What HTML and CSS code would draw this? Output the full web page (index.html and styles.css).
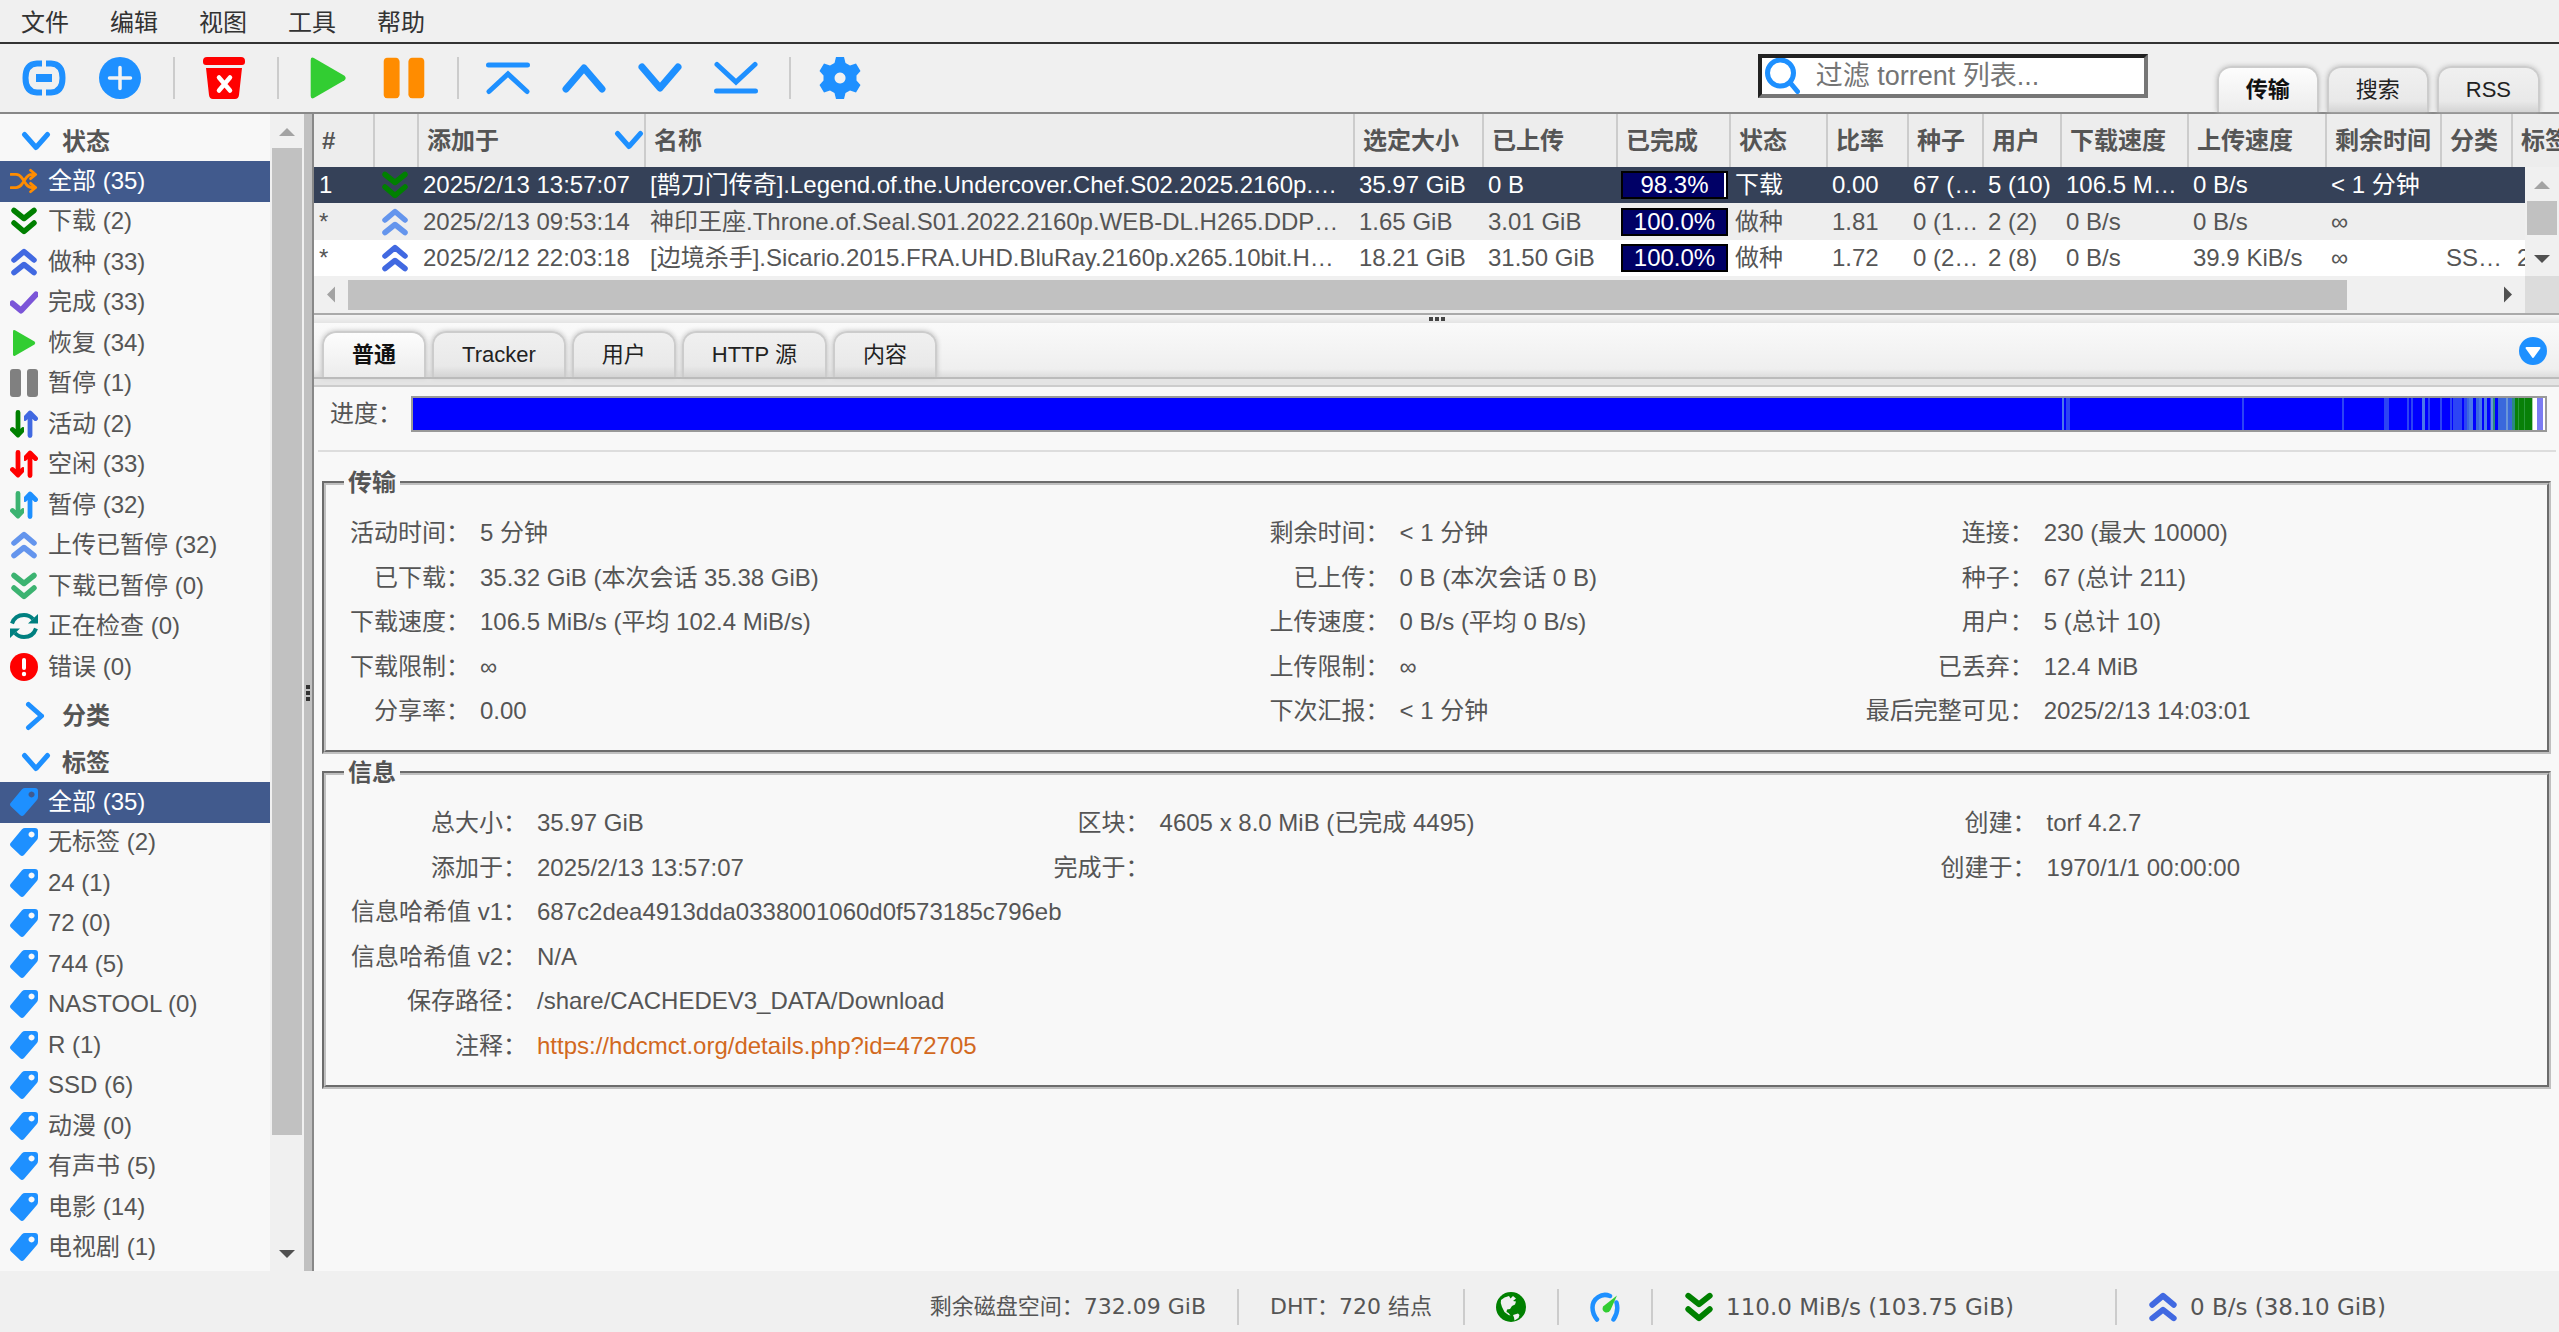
FILE: index.html
```html
<!DOCTYPE html>
<html lang="zh-CN">
<head>
<meta charset="utf-8">
<title>qBittorrent</title>
<link rel="stylesheet" href="styles.css">
</head>
<body>
<svg class="sprite" aria-hidden="true">
  <symbol id="i-down2" viewBox="0 0 28 28"><path d="M4 3.500l10 8 10-8M4 16l10 8.500L24 16" fill="none" stroke="currentColor" stroke-width="5.500" stroke-linecap="round" stroke-linejoin="round"/></symbol>
  <symbol id="i-up2" viewBox="0 0 28 28"><path d="M4 12l10-8.500L24 12M4 24.500l10-8 10 8" fill="none" stroke="currentColor" stroke-width="5.500" stroke-linecap="round" stroke-linejoin="round"/></symbol>
  <symbol id="i-chev" viewBox="0 0 30 30"><path d="M3.500 7.500L15 20.500l11.500-13" fill="none" stroke="currentColor" stroke-width="5" stroke-linecap="round" stroke-linejoin="round"/></symbol>
  <symbol id="i-play" viewBox="0 0 28 28"><path d="M3 2.500Q3 .500 5 1.200L24.500 12.500Q26 14 24.500 15.500L5 26.800Q3 27.500 3 25.500z" fill="#32cd32"/></symbol>
  <symbol id="i-pause" viewBox="0 0 28 28"><rect width="11" height="28" rx="3" fill="currentColor"/><rect x="17" width="11" height="28" rx="3" fill="currentColor"/></symbol>
  <symbol id="i-arrow" viewBox="0 0 14 28"><path d="M8 2.500v22M2.500 19.500L8 25l5-5.500" fill="none" stroke="currentColor" stroke-width="4.800" stroke-linecap="round" stroke-linejoin="round"/></symbol>
  <symbol id="i-tag" viewBox="0 0 28 28"><path fill="#1e90ff" fill-rule="evenodd" d="M15 0h10q3 0 3 3v6q0 2-1.500 3.500L14 27q-2 1.800-4 0L1 18.500q-2-2 0-4L12 1.200Q13.300 0 15 0zM21.500 3.500a3 3 0 1 0 .1 0z"/></symbol>
</svg>

<nav class="menubar">
  <button>文件</button><button>编辑</button><button>视图</button><button>工具</button><button>帮助</button>
</nav>

<header class="toolbar">
  <button class="tool" aria-label="添加链接"><svg viewBox="0 0 44 44"><path d="M20 7.500H15Q3.500 8 3.500 22T15 36.500h5M24 7.500H29Q40.500 8 40.500 22T29 36.500h-5" fill="none" stroke="#1e90ff" stroke-width="6"/><path d="M14 18h16v8H14z" fill="#1e90ff"/></svg></button>
  <button class="tool" aria-label="添加文件"><svg viewBox="0 0 44 44"><circle cx="22" cy="22" r="21" fill="#1e90ff"/><path d="M22 11.500v21M11.500 22h21" stroke="#f2f2f2" stroke-width="3.500" stroke-linecap="round"/></svg></button>
  <i class="tsep"></i>
  <button class="tool" aria-label="删除"><svg viewBox="0 0 44 44"><path d="M5 1h34q4 0 4 4v1q0 3-3 3H4Q1 9 1 6V5q0-4 4-4zM4 12h36l-3 27q-.500 4-4 4H11q-3.500 0-4-4z" fill="red"/><path d="M17 21.500l11 13M28 21.500l-11 13" stroke="#fff" stroke-width="4.500" stroke-linecap="round"/></svg></button>
  <i class="tsep"></i>
  <button class="tool" aria-label="恢复"><svg viewBox="0 0 28 28"><use href="#i-play"/></svg></button>
  <button class="tool orange" aria-label="暂停"><svg viewBox="-1 0 30 28"><use href="#i-pause" width="28" height="28"/></svg></button>
  <i class="tsep"></i>
  <button class="tool" aria-label="移到顶部"><svg viewBox="0 0 44 44"><path d="M2.500 9h39M3 35.500l19-17.500 19 17.500" fill="none" stroke="#1e90ff" stroke-width="5" stroke-linecap="round"/></svg></button>
  <button class="tool" aria-label="上移"><svg viewBox="0 0 44 44"><path d="M4 33L22 12l18 21" fill="none" stroke="#1e90ff" stroke-width="7" stroke-linecap="round" stroke-linejoin="round"/></svg></button>
  <button class="tool" aria-label="下移"><svg viewBox="0 0 44 44"><path d="M4 11l18 21 18-21" fill="none" stroke="#1e90ff" stroke-width="7" stroke-linecap="round" stroke-linejoin="round"/></svg></button>
  <button class="tool" aria-label="移到底部"><svg viewBox="0 0 44 44"><path d="M2.500 35h39M3 8.500L22 26 41 8.500" fill="none" stroke="#1e90ff" stroke-width="5" stroke-linecap="round"/></svg></button>
  <i class="tsep"></i>
  <button class="tool" aria-label="选项"><svg viewBox="0 0 44 44"><path fill="#1e90ff" fill-rule="evenodd" d="M18 1h8l1.500 6 4.500 2.500 6-2 4.500 7.500-4 4.500v5l4 4.500L38 36.500l-6-2-4.500 2.500-1.500 6h-8l-1.500-6-4.500-2.500-6 2L1.500 29l4-4.500v-5l-4-4.500L6 7.500l6 2L16.500 7zM22 16.500a5.500 5.500 0 1 0 .1 0z"/></svg></button>
  <label class="search">
    <svg viewBox="0 0 36 36"><circle cx="16.500" cy="15" r="13" fill="none" stroke="#1e90ff" stroke-width="5"/><path d="M26 24.500l7.500 9" stroke="#1e90ff" stroke-width="5" stroke-linecap="round"/></svg>
    <input type="text" placeholder="过滤 torrent 列表..." aria-label="过滤 torrent 列表">
  </label>
  <div class="tabs main-tabs">
    <button class="tab active">传输</button><button class="tab">搜索</button><button class="tab">RSS</button>
  </div>
</header>

<div class="desktop">
  <aside class="filters">
    <div class="filter-scroll">
      <h2><svg><use href="#i-chev"/></svg>状态</h2>
      <ul>
        <li><a class="sel" href="#"><svg viewBox="0 0 30 28"><path d="M1 7h5.500Q10 7 13 11l4 6q3 4 6.500 4H25M1 21h5.500Q10 21 13 17l4-6q3-4 6.500-4H25M22 2.500L27.500 7 22 11.500M22 16.500l5.500 4.500-5.500 4.500" fill="none" stroke="#ff8c00" stroke-width="3" stroke-linecap="round" stroke-linejoin="round"/></svg>全部 (35)</a></li>
        <li><a href="#"><svg class="c-green"><use href="#i-down2"/></svg>下载 (2)</a></li>
        <li><a href="#"><svg class="c-royal"><use href="#i-up2"/></svg>做种 (33)</a></li>
        <li><a href="#"><svg viewBox="0 0 28 28"><path d="M2.500 15.500L11 22.500 26 6.500" fill="none" stroke="#7b55d8" stroke-width="6" stroke-linecap="round" stroke-linejoin="round"/></svg>完成 (33)</a></li>
        <li><a href="#"><svg><use href="#i-play"/></svg>恢复 (34)</a></li>
        <li><a href="#"><svg class="c-gray"><use href="#i-pause"/></svg>暂停 (1)</a></li>
        <li><a href="#"><svg viewBox="0 0 28 28"><use class="c-green" href="#i-arrow" width="14" height="28"/><use class="c-royal" href="#i-arrow" width="14" height="28" transform="rotate(180 14 14)"/></svg>活动 (2)</a></li>
        <li><a href="#"><svg class="c-red" viewBox="0 0 28 28"><use href="#i-arrow" width="14" height="28"/><use href="#i-arrow" width="14" height="28" transform="rotate(180 14 14)"/></svg>空闲 (33)</a></li>
        <li><a href="#"><svg viewBox="0 0 28 28"><use class="c-sea" href="#i-arrow" width="14" height="28"/><use class="c-dodger" href="#i-arrow" width="14" height="28" transform="rotate(180 14 14)"/></svg>暂停 (32)</a></li>
        <li><a href="#"><svg class="c-corn"><use href="#i-up2"/></svg>上传已暂停 (32)</a></li>
        <li><a href="#"><svg class="c-sea"><use href="#i-down2"/></svg>下载已暂停 (0)</a></li>
        <li><a href="#"><svg viewBox="0 0 28 28"><path d="M2 11.500Q5 3 14 3q5.500 0 9 4M26 16.500Q23 25 14 25q-5.500 0-9-4" fill="none" stroke="#008080" stroke-width="4"/><path d="M28 2v9.500h-10zM0 26v-9.500h10z" fill="#008080"/></svg>正在检查 (0)</a></li>
        <li><a href="#"><svg viewBox="0 0 28 28"><circle cx="14" cy="14" r="14" fill="red"/><path d="M14 7v8" stroke="#fff" stroke-width="4" stroke-linecap="round"/><circle cx="14" cy="21" r="2.200" fill="#fff"/></svg>错误 (0)</a></li>
      </ul>
      <h2><svg class="closed"><use href="#i-chev"/></svg>分类</h2>
      <h2><svg><use href="#i-chev"/></svg>标签</h2>
      <ul>
        <li><a class="sel" href="#"><svg><use href="#i-tag"/></svg>全部 (35)</a></li>
        <li><a href="#"><svg><use href="#i-tag"/></svg>无标签 (2)</a></li>
        <li><a href="#"><svg><use href="#i-tag"/></svg>24 (1)</a></li>
        <li><a href="#"><svg><use href="#i-tag"/></svg>72 (0)</a></li>
        <li><a href="#"><svg><use href="#i-tag"/></svg>744 (5)</a></li>
        <li><a href="#"><svg><use href="#i-tag"/></svg>NASTOOL (0)</a></li>
        <li><a href="#"><svg><use href="#i-tag"/></svg>R (1)</a></li>
        <li><a href="#"><svg><use href="#i-tag"/></svg>SSD (6)</a></li>
        <li><a href="#"><svg><use href="#i-tag"/></svg>动漫 (0)</a></li>
        <li><a href="#"><svg><use href="#i-tag"/></svg>有声书 (5)</a></li>
        <li><a href="#"><svg><use href="#i-tag"/></svg>电影 (14)</a></li>
        <li><a href="#"><svg><use href="#i-tag"/></svg>电视剧 (1)</a></li>
      </ul>
    </div>
    <div class="vbar"><i class="arr up off"></i><div class="vtrack"><i class="vthumb side-thumb"></i></div><i class="arr down"></i></div>
  </aside>
  <div class="vsplit"><i></i><i></i><i></i></div>

  <main>
    <section class="torrents">
      <table class="list">
        <colgroup><col class="w-num"><col class="w-icon"><col class="w-added"><col><col class="w-size"><col class="w-up"><col class="w-done"><col class="w-state"><col class="w-ratio"><col class="w-seeds"><col class="w-peers"><col class="w-dl"><col class="w-ul"><col class="w-eta"><col class="w-cat"><col class="w-tag"></colgroup>
        <thead><tr><th>#</th><th></th><th class="sorted">添加于<svg viewBox="0 0 30 30"><use href="#i-chev"/></svg></th><th>名称</th><th>选定大小</th><th>已上传</th><th>已完成</th><th>状态</th><th>比率</th><th>种子</th><th>用户</th><th>下载速度</th><th>上传速度</th><th>剩余时间</th><th>分类</th><th>标签</th></tr></thead>
        <tbody>
          <tr class="picked"><td>1</td><td class="ic"><svg class="c-green"><use href="#i-down2"/></svg></td><td>2025/2/13 13:57:07</td><td>[鹊刀门传奇].Legend.of.the.Undercover.Chef.S02.2025.2160p.…</td><td>35.97 GiB</td><td>0 B</td><td class="pc"><div class="meter part">98.3%</div></td><td>下载</td><td>0.00</td><td>67 (…</td><td>5 (10)</td><td>106.5 M…</td><td>0 B/s</td><td>&lt; 1 分钟</td><td></td><td></td></tr>
          <tr><td>*</td><td class="ic"><svg class="c-corn"><use href="#i-up2"/></svg></td><td>2025/2/13 09:53:14</td><td>神印王座.Throne.of.Seal.S01.2022.2160p.WEB-DL.H265.DDP…</td><td>1.65 GiB</td><td>3.01 GiB</td><td class="pc"><div class="meter">100.0%</div></td><td>做种</td><td>1.81</td><td>0 (1…</td><td>2 (2)</td><td>0 B/s</td><td>0 B/s</td><td>∞</td><td></td><td></td></tr>
          <tr><td>*</td><td class="ic"><svg class="c-royal"><use href="#i-up2"/></svg></td><td>2025/2/12 22:03:18</td><td>[边境杀手].Sicario.2015.FRA.UHD.BluRay.2160p.x265.10bit.H…</td><td>18.21 GiB</td><td>31.50 GiB</td><td class="pc"><div class="meter">100.0%</div></td><td>做种</td><td>1.72</td><td>0 (2…</td><td>2 (8)</td><td>0 B/s</td><td>39.9 KiB/s</td><td>∞</td><td>SS…</td><td>24</td></tr>
        </tbody>
      </table>
      <div class="vbar list-bar"><i class="arr up off"></i><div class="vtrack"><i class="vthumb"></i></div><i class="arr down"></i></div>
      <div class="hbar"><i class="arr left off"></i><div class="htrack"><i class="hthumb"></i></div><i class="arr right"></i><i class="corner"></i></div>
    </section>
    <div class="hsplit"><i></i><i></i><i></i></div>

    <section class="props">
      <div class="props-head">
        <div class="tabs">
          <button class="tab active">普通</button><button class="tab">Tracker</button><button class="tab">用户</button><button class="tab">HTTP 源</button><button class="tab">内容</button>
        </div>
        <button class="collapse" aria-label="折叠"><svg viewBox="0 0 28 28"><circle cx="14" cy="14" r="14" fill="#1e90ff"/><path d="M7.500 11h13L14 20z" fill="#fff" stroke="#fff" stroke-width="2" stroke-linejoin="round"/></svg></button>
      </div>
      <div class="band"></div>
      <div class="pieces">
        <span>进度：</span>
        <svg viewBox="0 0 2132 32" preserveAspectRatio="none">
          <path fill="#00f" d="M0 0h2102v32H0z"/>
          <path fill="#4a78e8" d="M1649 0h2v32h-2zM2009 0h3v32h-3zM2056 0h4v32h-4zM2066 0h3v32h-3zM2071 0h3v32h-3zM2092 0h3v32h-3z"/>
          <path fill="#2c44f4" d="M1653 0h4v32h-4zM1829 0h2v32h-2zM1929 0h2v32h-2zM1971 0h3v32h-3zM1974 0h2v32h-2zM1994 0h2v32h-2zM1998 0h2v32h-2zM2015 0h2v32h-2zM2027 0h2v32h-2zM2037 0h2v32h-2zM2040 0h9v32h-9zM2051 0h3v32h-3zM2077 0h2v32h-2z"/>
          <path fill="#3a68dc" d="M2054 0h2v32h-2zM2063 0h3v32h-3zM2085 0h17v32h-17z"/>
          <path fill="#2a8a80" d="M2080 0h2v32h-2zM2099 0h3v32h-3z"/>
          <path fill="#6a96d8" d="M2078 0h2v32h-2zM2093 0h2v32h-2z"/>
          <path fill="#088008" d="M2102 0h17v32h-17z"/>
          <path fill="#2a9a3a" d="M2105 0h1v32h-1zM2111 0h1v32h-1z"/>
          <path fill="#fff" d="M2119 0h13v32h-13z"/>
          <path fill="#a8d0a8" d="M2119 0h1v32h-1z"/>
          <path fill="#7c7cf2" d="M2124 0h6v32h-6z"/>
        </svg>
      </div>
      <fieldset>
        <legend>传输</legend>
        <table class="facts">
          <colgroup><col class="f-126"><col class="f-t1"><col class="f-122"><col class="f-t2"><col class="f-170"><col></colgroup>
          <tr><th>活动时间：</th><td>5 分钟</td><th>剩余时间：</th><td>&lt; 1 分钟</td><th>连接：</th><td>230 (最大 10000)</td></tr>
          <tr><th>已下载：</th><td>35.32 GiB (本次会话 35.38 GiB)</td><th>已上传：</th><td>0 B (本次会话 0 B)</td><th>种子：</th><td>67 (总计 211)</td></tr>
          <tr><th>下载速度：</th><td>106.5 MiB/s (平均 102.4 MiB/s)</td><th>上传速度：</th><td>0 B/s (平均 0 B/s)</td><th>用户：</th><td>5 (总计 10)</td></tr>
          <tr><th>下载限制：</th><td>∞</td><th>上传限制：</th><td>∞</td><th>已丢弃：</th><td>12.4 MiB</td></tr>
          <tr><th>分享率：</th><td>0.00</td><th>下次汇报：</th><td>&lt; 1 分钟</td><th>最后完整可见：</th><td>2025/2/13 14:03:01</td></tr>
        </table>
      </fieldset>
      <fieldset>
        <legend>信息</legend>
        <table class="facts">
          <colgroup><col class="f-183"><col class="f-i1"><col class="f-96"><col class="f-i2"><col class="f-96"><col></colgroup>
          <tr><th>总大小：</th><td>35.97 GiB</td><th>区块：</th><td>4605 x 8.0 MiB (已完成 4495)</td><th>创建：</th><td>torf 4.2.7</td></tr>
          <tr><th>添加于：</th><td>2025/2/13 13:57:07</td><th>完成于：</th><td></td><th>创建于：</th><td>1970/1/1 00:00:00</td></tr>
          <tr><th>信息哈希值 v1：</th><td colspan="5">687c2dea4913dda0338001060d0f573185c796eb</td></tr>
          <tr><th>信息哈希值 v2：</th><td colspan="5">N/A</td></tr>
          <tr><th>保存路径：</th><td colspan="5">/share/CACHEDEV3_DATA/Download</td></tr>
          <tr><th>注释：</th><td colspan="5"><a href="#">https://hdcmct.org/details.php?id=472705</a></td></tr>
        </table>
      </fieldset>
    </section>
  </main>
</div>

<footer class="status">
  <span>剩余磁盘空间：732.09 GiB</span>
  <span>DHT：720 结点</span>
  <span><svg viewBox="0 0 30 30"><circle cx="15" cy="15" r="15" fill="#008000"/><path fill="#f0f0f0" d="M5 8Q8 5 13 4l1.500 2.500L17 4l3 2.500-3 2.500 3 .500-1 3-3 1.500-2 3-3 .500-.500 2.500 2 1 2 2.500-2-.500-4-3-2.500-5Q4 11 5 8zM17 23l5-1.500 1.500 1.500-1 3-4 2.500-.500-3z"/></svg></span>
  <span><svg viewBox="0 0 30 30"><path d="M7 27.500Q2.500 22 2.500 15.500A12.500 12.500 0 0 1 20 4M26.500 10.500q2.500 9-3 17" fill="none" stroke="#1e90ff" stroke-width="4.500" stroke-linecap="round"/><path d="M27 3.500L20.500 18q-1.500 3-5 2.500-4-1.500-2.500-6Z" fill="#32cd32"/></svg></span>
  <button class="speed dl"><svg class="c-green"><use href="#i-down2"/></svg>110.0 MiB/s (103.75 GiB)</button>
  <button class="speed ul"><svg class="c-royal"><use href="#i-up2"/></svg>0 B/s (38.10 GiB)</button>
</footer>
</body>
</html>
```
FILE: styles.css
```css
* { box-sizing: border-box; }
html, body { height: 100%; }
body {
  margin: 0;
  display: flex;
  flex-direction: column;
  overflow: hidden;
  background: #f0f0f0;
  color: #555;
  font: 24px/36px "Liberation Sans", "Noto Sans CJK SC", sans-serif;
}
button, input { font: inherit; color: inherit; }
button { border: 0; padding: 0; background: none; white-space: nowrap; cursor: pointer; }
.sprite { position: absolute; width: 0; height: 0; }

.c-green { color: #008000; }
.c-royal { color: #4169e1; }
.c-corn { color: #6495ed; }
.c-sea { color: #3cb371; }
.c-dodger { color: #1e90ff; }
.c-red { color: #f00; }
.c-gray { color: #808080; }

/* menu and toolbar */
.menubar {
  display: flex;
  gap: 41px;
  height: 44px;
  padding: 4px 21px 0;
  border-bottom: 2px solid #333;
  color: #333;
}
.toolbar {
  display: flex;
  align-items: center;
  height: 70px;
  padding-left: 22px;
  border-bottom: 2px solid #888;
}
.tool { width: 44px; height: 44px; flex: none; }
.tool + .tool { margin-left: 32px; }
.tool svg { display: block; width: 44px; height: 44px; }
.orange { color: #ff8c00; }
.tsep { flex: none; width: 2px; height: 42px; margin: 0 27px 0 31px; background: #ccc; }
.search {
  display: flex;
  align-items: center;
  width: 390px;
  height: 44px;
  margin: 0 69px 4px auto;
  padding-left: 2px;
  border: 4px solid #767676;
  border-top-color: #222;
  border-left-color: #222;
  background: #fff;
}
.search svg { width: 36px; height: 36px; flex: none; }
.search input {
  flex: 1;
  min-width: 0;
  height: 36px;
  margin-left: 16px;
  padding: 0;
  border: 0;
  outline: 0;
  background: none;
  font-size: 27px;
}
.search input::placeholder { color: #757575; }

.tabs { display: flex; gap: 6px; align-self: flex-end; }
.tab {
  height: 46px;
  padding: 0 28px;
  border: 2px solid #ccc;
  border-bottom: 0;
  border-radius: 14px 14px 0 0;
  background: linear-gradient(#f0f0f0, #e9e9e9 75%, #d4d4d4);
  box-shadow: 0 0 5px #bbb;
  color: #222;
  font-size: 22px;
  line-height: 42px;
}
.tab.active {
  background: linear-gradient(#fdfdfd, #ececec);
  color: #111;
  font-weight: 700;
}
.main-tabs { gap: 8px; margin-right: 19px; }
.main-tabs .tab { padding: 0 27px; }

/* body */
.desktop { flex: 1; display: flex; min-height: 0; background: #f8f8f8; }
.filters { width: 304px; flex: none; display: flex; }
.filter-scroll { flex: 1; overflow: hidden; }
.filters h2 {
  display: flex;
  gap: 11px;
  align-items: center;
  height: 47px;
  margin: 0;
  padding: 8px 0 0 21px;
  font-size: 24px;
}
.filters h2 svg { width: 30px; height: 30px; color: #1e90ff; }
.filters h2 .closed { transform: rotate(-90deg); }
.filters ul { margin: 0; padding: 0; list-style: none; }
.filters a {
  display: flex;
  align-items: center;
  gap: 10px;
  height: 40px;
  padding: 0 0 2px 10px;
  color: #555;
  text-decoration: none;
}
.filters li:nth-child(odd) a { height: 41px; }
.filters a svg { width: 28px; height: 28px; flex: none; }
.filters a.sel { background: #415a8d; color: #fff; }

.vbar {
  flex: none;
  width: 34px;
  display: flex;
  flex-direction: column;
  align-items: center;
  background: #f0f0f0;
}
.vtrack { flex: 1; }
.vthumb { display: block; width: 30px; height: 34px; background: #c1c1c1; }
.side-thumb { height: 90.6%; }
.arr { flex: none; display: block; width: 34px; height: 34px; background: #505050; }
.arr.off { background: #a3a3a3; }
.up { clip-path: polygon(9px 22px, 25px 22px, 17px 14px); }
.down { clip-path: polygon(9px 13px, 25px 13px, 17px 21px); }
.left { clip-path: polygon(21px 9px, 21px 25px, 13px 17px); }
.right { clip-path: polygon(13px 9px, 13px 25px, 21px 17px); }

.vsplit {
  flex: none;
  width: 10px;
  display: flex;
  flex-direction: column;
  justify-content: center;
  gap: 2px;
  padding: 0 2px;
  border-right: 2px solid #888;
  background: #c0c0c0;
}
.vsplit i { width: 4px; height: 4px; background: #333; }

main { flex: 1; min-width: 0; display: flex; flex-direction: column; }

/* torrent list */
.torrents { position: relative; overflow: hidden; border-bottom: 2px solid #aaa; background: #fff; }
.list { width: calc(100% + 54px); table-layout: fixed; border-collapse: collapse; white-space: nowrap; }
.w-num { width: 60px; }
.w-icon { width: 44px; }
.w-added { width: 227px; }
.w-size { width: 129px; }
.w-up { width: 134px; }
.w-done { width: 113px; }
.w-state { width: 97px; }
.w-ratio { width: 81px; }
.w-seeds { width: 75px; }
.w-peers { width: 78px; }
.w-dl { width: 127px; }
.w-ul { width: 138px; }
.w-eta { width: 115px; }
.w-cat { width: 71px; }
.w-tag { width: 100px; }
.list th {
  height: 53px;
  padding: 0 0 0 8px;
  border-right: 2px solid #ccc;
  background: #ededed;
  text-align: left;
}
.sorted svg { float: right; width: 30px; height: 36px; color: #1e90ff; }
.list td { height: 36px; padding: 0 0 0 5px; overflow: hidden; }
.list tbody tr:nth-child(2) td { height: 37px; background: #eee; }
.list .picked td { background: #354158; color: #fff; }
.list .ic { padding: 0 0 0 7px; }
.ic svg { display: block; width: 28px; height: 28px; }
.list .pc { padding: 0 2px 0 4px; }
.meter {
  height: 28px;
  border: 2px solid #000;
  background: #006;
  color: #fff;
  line-height: 24px;
  text-align: center;
}
.meter.part { box-shadow: inset -2px 0 #fff; }
.list-bar { position: absolute; top: 53px; right: 0; bottom: 37px; }
.hbar { display: flex; align-items: center; height: 37px; background: #f0f0f0; }
.htrack { flex: 1; }
.hthumb { display: block; width: 93.3%; height: 30px; background: #c1c1c1; }
.corner { width: 34px; height: 37px; background: #dcdcdc; }

.hsplit {
  display: flex;
  justify-content: center;
  gap: 2px;
  height: 8px;
  padding-top: 2px;
  background: linear-gradient(#f4f4f4, #e4e4e4);
}
.hsplit i { width: 4px; height: 4px; background: #444; }

/* properties */
.props-head {
  display: flex;
  justify-content: space-between;
  height: 56px;
  padding: 2px 12px 0 8px;
  border-bottom: 2px solid #bbb;
  background: linear-gradient(#fafafa, #efefef 85%, #ddd);
}
.collapse { align-self: center; width: 28px; height: 28px; }
.collapse svg { display: block; }
.band { height: 8px; border-bottom: 2px solid #ccc; background: #e4e4e4; }
.pieces {
  display: flex;
  align-items: center;
  height: 65px;
  margin: 0 3px 13px 4px;
  padding: 0 9px 9px 12px;
  border-bottom: 2px solid #ddd;
}
.pieces span { width: 81px; }
.pieces svg { flex: 1; height: 36px; border: 2px solid #999; background: #fff; }
fieldset {
  margin: 0 8px 1px;
  padding: 10px 18px 17px;
  border: 4px groove #c0c0c0;
}
legend { padding: 0 4px; font-weight: 700; }
.facts { width: 100%; table-layout: fixed; border-collapse: collapse; white-space: nowrap; }
.facts th, .facts td { height: 44px; padding: 0; text-align: left; }
.facts tr:nth-child(even) > * { height: 45px; }
.facts th { font-weight: 400; text-align: right; }
.facts td { padding-left: 10px; }
.facts a { color: #d2691e; text-decoration: none; }
.f-122 { width: 122px; }
.f-126 { width: 126px; }
.f-170 { width: 170px; }
.f-183 { width: 183px; }
.f-96 { width: 96px; }
.f-t1 { width: 36.5%; }
.f-t2 { width: 21.7%; }
.f-i1 { width: 24.1%; }
.f-i2 { width: 36.2%; }

/* status bar */
.status {
  display: flex;
  align-items: center;
  justify-content: flex-end;
  height: 61px;
  padding-top: 10px;
  font: 22px/36px "DejaVu Sans", "Noto Sans CJK SC", sans-serif;
  white-space: nowrap;
}
.status > * { display: flex; align-items: center; height: 36px; padding: 0 31px; }
.status > * + * { border-left: 2px solid #ccc; }
.status svg { width: 30px; height: 30px; }
.status .speed { gap: 12px; font-size: 23px; text-align: left; }
.dl { width: 464px; }
.ul { width: 444px; }
```
